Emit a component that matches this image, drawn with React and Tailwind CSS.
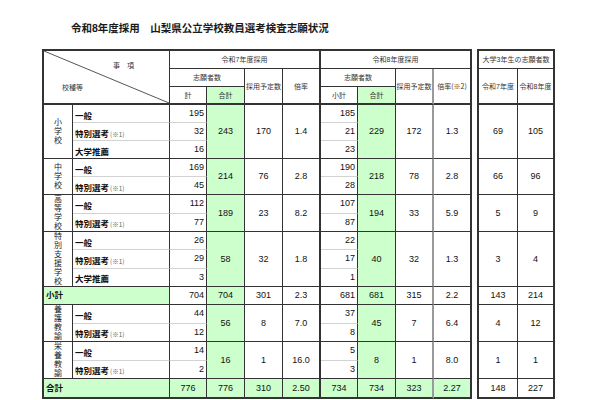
import React from "react";

const R = "border-r border-r-[#333]";
const R2 = "border-r-2 border-r-[#333]";
const R2G = "border-r-2 border-r-[#9a9a9a]";
const B = "border-b border-b-[#333]";
const BL = "border-b border-b-[#d2d2d2]";
const B2 = "border-b-2 border-b-[#333]";
const L2 = "border-l-2 border-l-[#333]";
const T2 = "border-t-2 border-t-[#333]";
const GR = "bg-[#ccffcc]";
const NUM = "p-0 text-[9px] leading-none text-center";
const NUMR = "p-0 pr-[2px] text-[9px] leading-none text-right";
const HD = "p-0 text-[7px] leading-none text-center text-[#333]";
const JP = "font-['Noto_Sans_CJK_JP',sans-serif]";

const groups = [
  {
    label: "小学校",
    rows: [
      ["一般", 195, 185, false],
      ["特別選考", 32, 21, true],
      ["大学推薦", 16, 23, false],
    ],
    s7: [243, 170, "1.4"],
    s8: [229, 172, "1.3"],
    u: [69, 105],
  },
  {
    label: "中学校",
    rows: [
      ["一般", 169, 190, false],
      ["特別選考", 45, 28, true],
    ],
    s7: [214, 76, "2.8"],
    s8: [218, 78, "2.8"],
    u: [66, 96],
  },
  {
    label: "高等学校",
    rows: [
      ["一般", 112, 107, false],
      ["特別選考", 77, 87, true],
    ],
    s7: [189, 23, "8.2"],
    s8: [194, 33, "5.9"],
    u: [5, 9],
  },
  {
    label: "特別支援学校",
    rows: [
      ["一般", 26, 22, false],
      ["特別選考", 29, 17, true],
      ["大学推薦", 3, 1, false],
    ],
    s7: [58, 32, "1.8"],
    s8: [40, 32, "1.3"],
    u: [3, 4],
  },
  { subtotal: true },
  {
    label: "養護教諭",
    rows: [
      ["一般", 44, 37, false],
      ["特別選考", 12, 8, true],
    ],
    s7: [56, 8, "7.0"],
    s8: [45, 7, "6.4"],
    u: [4, 12],
  },
  {
    label: "栄養教諭",
    rows: [
      ["一般", 14, 5, false],
      ["特別選考", 2, 3, true],
    ],
    s7: [16, 1, "16.0"],
    s8: [8, 1, "8.0"],
    u: [1, 1],
  },
];

function Vertical({ text }) {
  return (
    <div className="flex flex-col items-center text-[8px] leading-[9px] text-[#222]">
      {text.split("").map((c, i) => (
        <span key={i}>{c}</span>
      ))}
    </div>
  );
}

function GroupRows({ g }) {
  const n = g.rows.length;
  return g.rows.map((r, i) => {
    const last = i === n - 1;
    const sub = last ? B : BL;
    return (
      <tr key={i} className="h-[18px]">
        {i === 0 && (
          <td rowSpan={n} className={"p-0 text-center " + L2 + " " + R + " " + B}>
            <Vertical text={g.label} />
          </td>
        )}
        <td className={"p-0 pl-[2px] text-left leading-none " + R + " " + sub}>
          <span className="text-[8.5px] font-bold text-[#111]">{r[0]}</span>
          {r[3] && (
            <span className={"text-[6.5px] text-[#666] ml-[1px] " + JP}>(※1)</span>
          )}
        </td>
        <td className={NUMR + " " + R + " " + sub}>{r[1]}</td>
        {i === 0 && (
          <>
            <td rowSpan={n} className={NUM + " " + GR + " " + R + " " + B}>{g.s7[0]}</td>
            <td rowSpan={n} className={NUM + " " + R + " " + B}>{g.s7[1]}</td>
            <td rowSpan={n} className={NUM + " " + R2 + " " + B}>{g.s7[2]}</td>
          </>
        )}
        <td className={NUMR + " " + R + " " + sub}>{r[2]}</td>
        {i === 0 && (
          <>
            <td rowSpan={n} className={NUM + " " + GR + " " + R + " " + B}>{g.s8[0]}</td>
            <td rowSpan={n} className={NUM + " " + R2G + " " + B}>{g.s8[1]}</td>
            <td rowSpan={n} className={NUM + " " + R2 + " " + B}>{g.s8[2]}</td>
            <td rowSpan={n} className={NUM + " " + L2 + " " + R + " " + B}>{g.u[0]}</td>
            <td rowSpan={n} className={NUM + " " + R2 + " " + B}>{g.u[1]}</td>
          </>
        )}
      </tr>
    );
  });
}

function SubtotalRow() {
  return (
    <tr className="h-[18px]">
      <td colSpan={2} className={"p-0 pl-[2px] text-left text-[8.5px] font-bold leading-none " + GR + " " + L2 + " " + R + " " + B}>
        小計
      </td>
      <td className={NUMR + " " + R + " " + B}>704</td>
      <td className={NUM + " " + GR + " " + R + " " + B}>704</td>
      <td className={NUM + " " + R + " " + B}>301</td>
      <td className={NUM + " " + R2 + " " + B}>2.3</td>
      <td className={NUMR + " " + R + " " + B}>681</td>
      <td className={NUM + " " + GR + " " + R + " " + B}>681</td>
      <td className={NUM + " " + R2G + " " + B}>315</td>
      <td className={NUM + " " + R2 + " " + B}>2.2</td>
      <td className={NUM + " " + L2 + " " + R + " " + B}>143</td>
      <td className={NUM + " " + R2 + " " + B}>214</td>
    </tr>
  );
}

function TotalRow() {
  return (
    <tr className="h-[20px]">
      <td colSpan={2} className={"p-0 pl-[2px] text-left text-[8.5px] font-bold leading-none " + GR + " " + L2 + " " + R + " " + B2}>
        合計
      </td>
      <td className={NUM + " " + GR + " " + R + " " + B2}>776</td>
      <td className={NUM + " " + GR + " " + R + " " + B2}>776</td>
      <td className={NUM + " " + GR + " " + R + " " + B2}>310</td>
      <td className={NUM + " " + GR + " " + R2 + " " + B2}>2.50</td>
      <td className={NUM + " " + GR + " " + R + " " + B2}>734</td>
      <td className={NUM + " " + GR + " " + R + " " + B2}>734</td>
      <td className={NUM + " " + GR + " " + R2G + " " + B2}>323</td>
      <td className={NUM + " " + GR + " " + R2 + " " + B2}>2.27</td>
      <td className={NUM + " " + L2 + " " + R + " " + B2}>148</td>
      <td className={NUM + " " + R2 + " " + B2}>227</td>
    </tr>
  );
}

export default function App() {
  return (
    <div className="w-[599px] h-[400px] overflow-hidden bg-white text-[#111] font-['Liberation_Sans','Noto_Sans_CJK_JP',sans-serif]">
      <div className="h-[49px] pt-[20px] pl-[71px] text-[10.5px] leading-[16px] font-bold text-[#1a1a1a]">
        令和8年度採用　山梨県公立学校教員選考検査志願状況
      </div>
      <table className="ml-[42px] w-[513px] table-fixed border-separate border-spacing-0">
        <colgroup>
          <col className="w-[31px]" />
          <col className="w-[97px]" />
          <col className="w-[37px]" />
          <col className="w-[38px]" />
          <col className="w-[38px]" />
          <col className="w-[38px]" />
          <col className="w-[37px]" />
          <col className="w-[38px]" />
          <col className="w-[38px]" />
          <col className="w-[38px]" />
          <col className="w-[5px]" />
          <col className="w-[41px]" />
          <col className="w-[37px]" />
        </colgroup>
        <tbody>
          <tr className="h-[20px]">
            <td colSpan={2} rowSpan={3} className={"p-0 relative align-top " + L2 + " " + T2 + " " + R + " " + B2}>
              <svg className="absolute inset-0 w-full h-full" preserveAspectRatio="none" viewBox="0 0 100 100">
                <line x1="0" y1="0" x2="100" y2="100" stroke="#555" strokeWidth="1" vectorEffect="non-scaling-stroke" />
              </svg>
              <div className="flex flex-col text-[7px] leading-[8px] text-[#333]">
                <div className="mt-[11px] pl-[69px]">事　項</div>
                <div className="mt-[14px] pl-[18px]">校種等</div>
              </div>
            </td>
            <td colSpan={4} className={HD + " " + T2 + " " + R2 + " " + B}>令和7年度採用</td>
            <td colSpan={4} className={HD + " " + T2 + " " + R2 + " " + B}>令和8年度採用</td>
            <td rowSpan={19} className="p-0"></td>
            <td colSpan={2} className={HD + " " + T2 + " " + L2 + " " + R2 + " " + B}>大学3年生の志願者数</td>
          </tr>
          <tr className="h-[18px]">
            <td colSpan={2} className={HD + " " + R + " " + B}>志願者数</td>
            <td rowSpan={2} className={HD + " " + R + " " + B2}>採用予定数</td>
            <td rowSpan={2} className={HD + " " + R2 + " " + B2}>倍率</td>
            <td colSpan={2} className={HD + " " + R + " " + B}>志願者数</td>
            <td rowSpan={2} className={HD + " " + R2G + " " + B2}>採用予定数</td>
            <td rowSpan={2} className={HD + " " + R2 + " " + B2 + " " + JP}>倍率(※2)</td>
            <td rowSpan={2} className={HD + " " + L2 + " " + R + " " + B2}>令和7年度</td>
            <td rowSpan={2} className={HD + " " + R2 + " " + B2}>令和8年度</td>
          </tr>
          <tr className="h-[18px]">
            <td className={HD + " " + R + " " + B2}>計</td>
            <td className={HD + " " + GR + " " + R + " " + B2}>合計</td>
            <td className={HD + " " + R + " " + B2}>小計</td>
            <td className={HD + " " + GR + " " + R + " " + B2}>合計</td>
          </tr>
          {groups.map((g, gi) =>
            g.subtotal ? <SubtotalRow key={gi} /> : <GroupRows key={gi} g={g} />
          )}
          <TotalRow />
        </tbody>
      </table>
      <div className={"pl-[55px] mt-[2px] text-[8px] leading-[10px] text-[#555] " + JP}>
        (※1) 大学3年生の志願者を除く特別選考志願者数
      </div>
    </div>
  );
}
